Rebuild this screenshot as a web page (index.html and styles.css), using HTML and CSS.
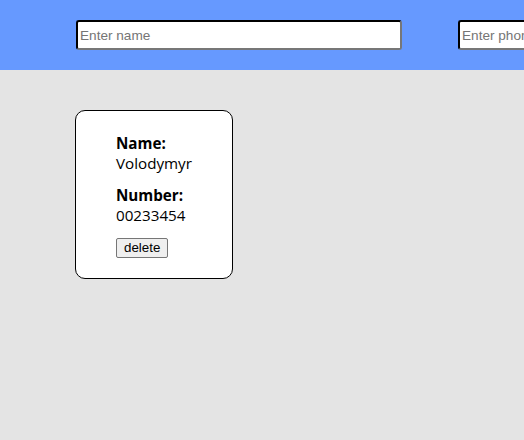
FILE: index.html
```html
<!DOCTYPE html>
<html>
<head>
<meta charset="utf-8">
<link rel="stylesheet" href="styles.css">
</head>
<body>
<header class="top">
  <input class="field field-name" type="text" placeholder="Enter name">
  <input class="field field-phone" type="text" placeholder="Enter phone">
</header>
<main class="list">
  <div class="card">
    <div class="label">Name:</div>
    <div class="value">Volodymyr</div>
    <div class="label label-gap">Number:</div>
    <div class="value">00233454</div>
    <button class="delete">delete</button>
  </div>
</main>
</body>
</html>
```
FILE: styles.css
```css
html, body {
  margin: 0;
  padding: 0;
  background: #e4e4e4;
  height: 100%;
  overflow: hidden;
}
body {
  font-family: "Open Sans", sans-serif;
}
.top {
  background: #6699ff;
  height: 70px;
  display: flex;
  align-items: center;
  gap: 56px;
  padding-left: 76px;
  box-sizing: border-box;
  white-space: nowrap;
  overflow: hidden;
}
.field {
  flex: none;
  width: 326px;
  height: 30px;
  box-sizing: border-box;
  border: 2px inset #767676;
  border-top-color: #222;
  border-left-color: #222;
  border-right-color: #777;
  border-bottom-color: #777;
  border-radius: 3px;
  padding: 1px 2px;
  font-family: "Liberation Sans", Arial, sans-serif;
  font-size: 13.6px;
  background: #fff;
  outline: none;
}
.field::placeholder {
  color: #757575;
}
.list {
  padding: 40px 0 0 75px;
}
.card {
  width: 158px;
  box-sizing: border-box;
  border: 1px solid #000;
  border-radius: 10px;
  background: #fff;
  padding: 22px 40px 20px 40px;
  display: flex;
  flex-direction: column;
  align-items: flex-start;
}
.label {
  font-weight: 700;
  font-size: 15.2px;
  line-height: 20px;
  color: #000;
}
.label-gap {
  margin-top: 12px;
}
.value {
  font-size: 15.2px;
  line-height: 20px;
  color: #000;
}
.delete {
  margin-top: 13px;
  font-family: "Liberation Sans", Arial, sans-serif;
  font-size: 13.33px;
  padding: 1px 7px;
  background: #efefef;
  border: 1px solid #767676;
  border-radius: 2px;
  color: #000;
  height: 20px;
  line-height: 16px;
}
```
